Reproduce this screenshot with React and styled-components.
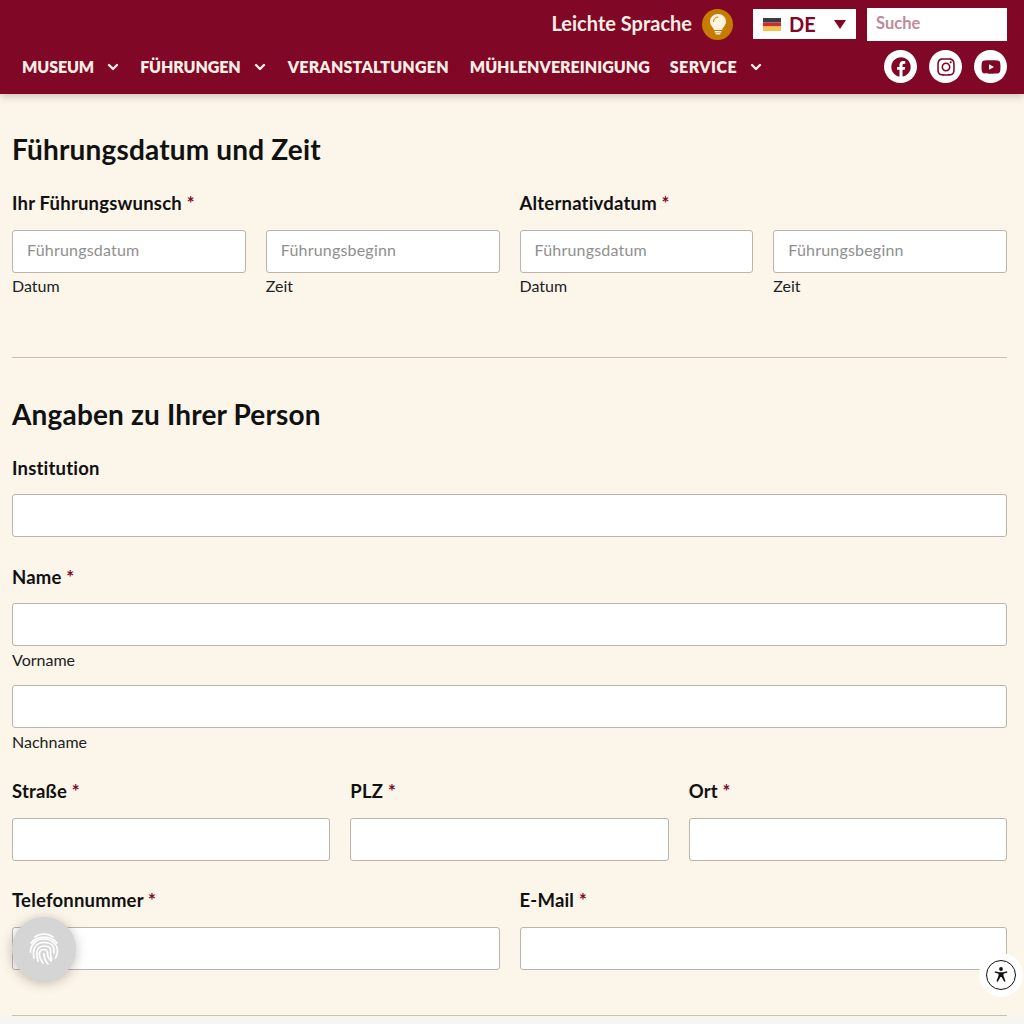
import React from "react";
import styled, { createGlobalStyle } from "styled-components";
import { FaFacebook, FaInstagram, FaYoutube } from "react-icons/fa";

const Global = createGlobalStyle`
  html, body { margin: 0; padding: 0; height: 1024px; overflow: hidden; background: #f7f4f1; }
  * { box-sizing: border-box; }
  body { font-family: "Lato", "Open Sans", sans-serif; color: #111; }
`;
const Page = styled.div`width: 1024px; height: 1024px; position: relative; overflow: hidden;`;
const Header = styled.header`
  height: 94px; background: #800725; box-shadow: 0 2px 8px rgba(90,70,50,.3);
  padding: 8px 17px 0 22px; display: flex; flex-direction: column; position: relative; z-index: 1;
`;
const TopRow = styled.div`display: flex; justify-content: flex-end; align-items: center; height: 32px;`;
const Easy = styled.span`font-size: 20px; line-height: 24px; font-weight: 700; color: #fbeee6; margin: 0 10px 3px 0;`;
const Bulb = styled.span`
  width: 31px; height: 31px; border-radius: 50%; background: #c67c00;
  display: flex; align-items: center; justify-content: center; margin-right: 20px;
`;
const Lang = styled.div`
  width: 103px; height: 30px; background: #fff; display: flex; align-items: center; padding: 0 10px 1px;
  color: #800725; font-size: 20px; font-weight: 700; margin-right: 11px;
`;
const Flag = styled.svg`width: 18px; height: 13px; margin: 1px 8px 0 0; flex: none;`;
const Caret = styled.span`
  margin: 2px 0 0 auto; width: 0; height: 0; border-left: 6.5px solid transparent; border-right: 6.5px solid transparent;
  border-top: 9px solid #800725;
`;
const Search = styled.div`
  width: 140px; height: 33px; background: #fff; color: #c08a9b; font-size: 16.500px; font-weight: 700;
  display: flex; align-items: center; padding: 0 0 2px 9px;
`;
const NavRow = styled.div`display: flex; align-items: center; height: 41px; margin-top: 6px;`;
const NavItem = styled.span`
  display: flex; align-items: center; color: #fbeee6; font-size: 16px; font-weight: 800;
  margin-right: ${p => p.$gap}px; letter-spacing: ${p => p.$track ?? 0}px;
`;
const Chev = styled.svg`width: 12px; height: 8px; margin-left: 13px; margin-right: -1px;`;
const Socials = styled.div`margin-left: auto; display: flex; gap: 12px;`;
const Social = styled.span`
  width: 33px; height: 33px; border-radius: 50%; background: #fff; color: #800725;
  display: flex; align-items: center; justify-content: center; font-size: 20px;
`;
const Main = styled.main`padding: 0 17px 0 12px; background: #fcf5ea; height: 923px;`;
const Section = styled.section`
  padding-top: ${p => p.$top}px; padding-bottom: ${p => p.$bottom}px; border-bottom: 1px solid #c9c0b2;
`;
const H2 = styled.h2`margin: 0; font-size: 28px; line-height: 36px; font-weight: 700; color: #111; letter-spacing: .17px;`;
const Row = styled.div`
  display: grid; grid-template-columns: ${p => p.$cols}; column-gap: 20px; margin-top: ${p => p.$top ?? 0}px;
`;
const Field = styled.div`display: flex; flex-direction: column; min-width: 0;`;
const Label = styled.div`
  font-size: 18.500px; line-height: 24px; font-weight: 700; color: #111; letter-spacing: .2px;
  margin-bottom: ${p => p.$gap ?? 14}px;
`;
const Star = styled.span`color: #800725;`;
const Input = styled.div`
  height: 43px; background: #fff; border: 1px solid #bcb4a8; border-radius: 3px;
  display: flex; align-items: center; padding: 0 0 4px 14px; font-size: 16px; letter-spacing: .2px; color: #8f8f8f;
`;
const Sub = styled.div`font-size: 16px; line-height: 20px; margin-top: ${p => p.$top ?? 3}px; color: #222;`;
const Pair = styled.div`display: grid; grid-template-columns: 1fr 1fr; column-gap: 20px;`;
const FingerBtn = styled.div`
  position: absolute; left: 12px; top: 917px; width: 64px; height: 64px; border-radius: 50%;
  background: #d5d5d5; box-shadow: 0 2px 12px rgba(80,70,60,.35);
  display: flex; align-items: center; justify-content: center;
`;
const A11y = styled.div`
  position: absolute; left: 979px; top: 953px; width: 44px; height: 44px; border-radius: 50%; background: #fff;
  display: flex; align-items: center; justify-content: center;
`;
const A11yRing = styled.div`
  width: 30px; height: 30px; border-radius: 50%; border: 1.5px solid #111;
  display: flex; align-items: center; justify-content: center;
`;

const Req = ({ children, gap }) => <Label $gap={gap}>{children} <Star>*</Star></Label>;
const DateField = ({ ph, sub }) => (
  <Field><Input>{ph}</Input><Sub>{sub}</Sub></Field>
);
const ChevIcon = () => (
  <Chev viewBox="0 0 12 8" fill="none" stroke="currentColor" strokeWidth="2.400" strokeLinecap="round" strokeLinejoin="round">
    <path d="M2 2l4 4 4-4" />
  </Chev>
);

export default function App() {
  return (
    <Page>
      <Global />
      <Header>
        <TopRow>
          <Easy>Leichte Sprache</Easy>
          <Bulb>
            <svg width="18" height="22" viewBox="0 0 18 22" fill="#fdf3df">
              <path d="M9 1C4.500 1 1 4.300 1 8.500c0 2.700 1.300 4.300 2.500 5.700.8 1 1.300 1.800 1.500 2.800h8c.2-1 .7-1.800 1.500-2.800C15.700 12.800 17 11.200 17 8.500 17 4.300 13.500 1 9 1z" />
              <rect x="5.500" y="18" width="7" height="1.600" rx=".6" />
              <rect x="6.500" y="20" width="5" height="1.600" rx=".8" />
              <path d="M4.500 8.500C4.500 6 6.500 4 9 4" fill="none" stroke="#c67c00" strokeWidth="1" strokeLinecap="round" />
            </svg>
          </Bulb>
          <Lang>
            <Flag viewBox="0 0 18 13"><rect width="18" height="4.500" fill="#3a3a42" /><rect y="4.500" width="18" height="4" fill="#c8302e" /><rect y="8.500" width="18" height="4.500" fill="#f6c04a" /></Flag>
            DE<Caret />
          </Lang>
          <Search>Suche</Search>
        </TopRow>
        <NavRow>
          <NavItem $gap={22} $track={-0.1}>MUSEUM<ChevIcon /></NavItem>
          <NavItem $gap={23} $track={-0.1}>FÜHRUNGEN<ChevIcon /></NavItem>
          <NavItem $gap={21} $track={0.2}>VERANSTALTUNGEN</NavItem>
          <NavItem $gap={20}>MÜHLENVEREINIGUNG</NavItem>
          <NavItem $gap={20} $track={0.45}>SERVICE<ChevIcon /></NavItem>
          <Socials>
            <Social><FaFacebook /></Social>
            <Social><FaInstagram /></Social>
            <Social><FaYoutube /></Social>
          </Socials>
        </NavRow>
      </Header>
      <Main>
        <Section $top={37} $bottom={61}>
          <H2>Führungsdatum und Zeit</H2>
          <Row $cols="1fr 1fr" $top={24}>
            <Field>
              <Req gap={15}>Ihr Führungswunsch</Req>
              <Pair><DateField ph="Führungsdatum" sub="Datum" /><DateField ph="Führungsbeginn" sub="Zeit" /></Pair>
            </Field>
            <Field>
              <Req gap={15}>Alternativdatum</Req>
              <Pair><DateField ph="Führungsdatum" sub="Datum" /><DateField ph="Führungsbeginn" sub="Zeit" /></Pair>
            </Field>
          </Row>
        </Section>
        <Section $top={38} $bottom={45}>
          <H2>Angaben zu Ihrer Person</H2>
          <Row $cols="1fr" $top={24}>
            <Field><Label>Institution</Label><Input /></Field>
          </Row>
          <Row $cols="1fr" $top={28}>
            <Field><Req>Name</Req><Input /><Sub $top={4}>Vorname</Sub></Field>
          </Row>
          <Row $cols="1fr" $top={15}>
            <Field><Input /><Sub $top={4}>Nachname</Sub></Field>
          </Row>
          <Row $cols="1fr 1fr 1fr" $top={27}>
            <Field><Req gap={15}>Straße</Req><Input /></Field>
            <Field><Req gap={15}>PLZ</Req><Input /></Field>
            <Field><Req gap={15}>Ort</Req><Input /></Field>
          </Row>
          <Row $cols="1fr 1fr" $top={27}>
            <Field><Req gap={15}>Telefonnummer</Req><Input /></Field>
            <Field><Req gap={15}>E-Mail</Req><Input /></Field>
          </Row>
        </Section>
      </Main>
      <FingerBtn>
        <svg width="30" height="34" viewBox="0 0 30 34" fill="none" stroke="#fff" strokeWidth="1.700" strokeLinecap="round">
          <path d="M6 5C11 1 19 1 24 5" />
          <path d="M2 11C8 3.500 22 3.500 28 11" />
          <path d="M1.500 20C1.500 12 8 7 15 7s13.500 5 13.500 12c0 3-1 5-2 7" />
          <path d="M5 26C3.500 19 5 10.500 15 10.500S25 16 25 21" />
          <path d="M9 29C7 24 6.500 14 15 14s6.500 5 6.500 9c0 2 .5 3 1.500 4" />
          <path d="M14 31c-3-4-4-7-3.500-10 .5-3 2.500-3.500 4.500-3.500s3.500 1.500 3.500 4c0 4 2 6 4 7.500" />
          <path d="M19 32c-3-3-4-6-4-10.500" />
        </svg>
      </FingerBtn>
      <A11y>
        <A11yRing>
          <svg width="18" height="18" viewBox="0 0 18 18" fill="#111">
            <circle cx="9" cy="3" r="1.900" />
            <path d="M3 5.200l4 1.100h4l4-1.100.4 1.300-3.900 1.300v2l2 5.400-1.300.5L9.600 11H8.400l-2.600 4.700-1.300-.5 2-5.400v-2L2.600 6.500z" />
          </svg>
        </A11yRing>
      </A11y>
    </Page>
  );
}
